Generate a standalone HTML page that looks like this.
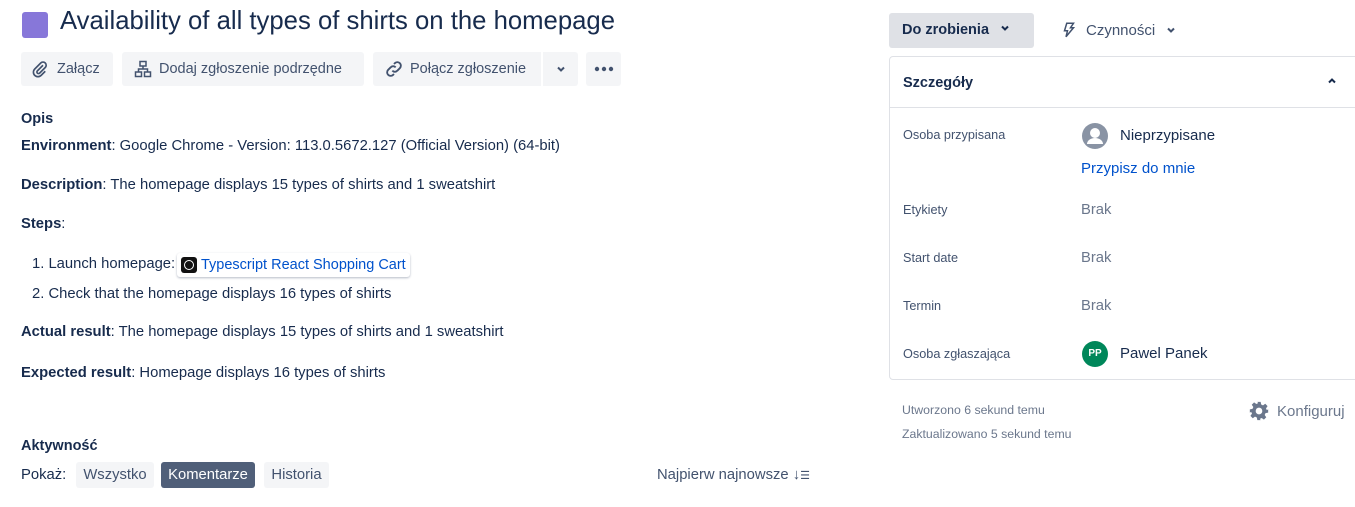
<!DOCTYPE html>
<html><head><meta charset="utf-8"><style>
*{box-sizing:border-box;margin:0;padding:0}
body{width:1355px;height:507px;background:#fff;font-family:"Liberation Sans",sans-serif;color:#172b4d;position:relative;overflow:hidden;font-size:14.8px}
.a{position:absolute;white-space:nowrap}
.btn{position:absolute;top:52px;height:34px;background:#f4f5f7;border-radius:3px;display:flex;align-items:center;font-size:14.5px;color:#42526e}
.lbl{font-size:12.7px;color:#42526e}
.gray{color:#6b778c}
b{font-weight:bold}
</style></head><body>
<div class="a" style="left:22px;top:12px;width:26px;height:26px;background:#8777d9;border-radius:3px"></div>
<div class="a" style="left:60px;top:7px;font-size:25.7px;color:#172b4d">Availability of all types of shirts on the homepage</div>

<div class="btn" style="left:21px;width:92px;padding-left:10px"><svg width="18" height="18" viewBox="0 0 24 24" fill="none" stroke="#42526e" stroke-width="2.2"><path d="M16 7l-7.5 7.5a2 2 0 0 0 3 3L19 10a4 4 0 0 0-6-6l-8 8a6 6 0 0 0 8.5 8.5L19 15"/></svg><span style="margin-left:8px">Załącz</span></div>
<div class="btn" style="left:122px;width:242px;padding-left:12px"><svg width="18" height="18" viewBox="0 0 24 24" fill="none" stroke="#42526e" stroke-width="2"><rect x="8" y="2" width="8" height="6"/><rect x="2" y="16" width="8" height="6"/><rect x="14" y="16" width="8" height="6"/><path d="M12 8v4M6 16v-4h12v4"/></svg><span style="margin-left:7px">Dodaj zgłoszenie podrzędne</span></div>
<div class="btn" style="left:373px;width:168px;padding-left:11px;border-radius:3px 0 0 3px"><svg width="20" height="20" viewBox="0 0 24 24" fill="none" stroke="#42526e" stroke-width="2.2"><path d="M10 14a4 4 0 0 0 6 0l3-3a4 4 0 0 0-6-6l-1 1M14 10a4 4 0 0 0-6 0l-3 3a4 4 0 0 0 6 6l1-1"/></svg><span style="margin-left:6px">Połącz zgłoszenie</span></div>
<div class="btn" style="left:543px;width:35px;justify-content:center;border-radius:0 3px 3px 0"><svg width="12" height="12" viewBox="0 0 12 12"><path d="M3 4.5l3 3 3-3" stroke="#42526e" stroke-width="2" fill="none"/></svg></div>
<div class="btn" style="left:586px;width:35px;justify-content:center"><svg width="20" height="6" viewBox="0 0 20 6"><circle cx="3" cy="3" r="2.2" fill="#42526e"/><circle cx="10" cy="3" r="2.2" fill="#42526e"/><circle cx="17" cy="3" r="2.2" fill="#42526e"/></svg></div>

<div class="a" style="left:21px;top:111px;font-size:14.5px;font-weight:bold">Opis</div>
<div class="a" style="left:21px;top:138px"><b>Environment</b>: Google Chrome - Version: 113.0.5672.127 (Official Version) (64-bit)</div>
<div class="a" style="left:21px;top:177px"><b>Description</b>: The homepage displays 15 types of shirts and 1 sweatshirt</div>
<div class="a" style="left:21px;top:216px"><b>Steps</b>:</div>
<div class="a" style="left:32px;top:256px">1. Launch homepage:</div>
<div class="a" style="left:177px;top:253px;height:24px;padding:0 4px;border-radius:3px;box-shadow:0 1px 2px rgba(9,30,66,.3);display:flex;align-items:center;color:#0052cc;font-size:14.5px"><span style="width:16px;height:16px;background:#111;border-radius:3px;display:inline-block;margin-right:4px;position:relative"><span style="position:absolute;left:3px;top:3px;width:10px;height:10px;border:1.3px solid #fff;border-radius:50%"></span></span>Typescript React Shopping Cart</div>
<div class="a" style="left:32px;top:286px">2. Check that the homepage displays 16 types of shirts</div>
<div class="a" style="left:21px;top:324px"><b>Actual result</b>: The homepage displays 15 types of shirts and 1 sweatshirt</div>
<div class="a" style="left:21px;top:365px"><b>Expected result</b>: Homepage displays 16 types of shirts</div>

<div class="a" style="left:21px;top:438px;font-weight:bold;font-size:14.5px">Aktywność</div>
<div class="a" style="left:21px;top:467px">Pokaż:</div>
<div class="a" style="left:76px;top:462px;height:26px;width:78px;background:#f4f5f7;border-radius:3px;text-align:center;line-height:26px;color:#42526e">Wszystko</div>
<div class="a" style="left:161px;top:462px;height:26px;width:94px;background:#505f79;border-radius:3px;text-align:center;line-height:26px;color:#fff">Komentarze</div>
<div class="a" style="left:264px;top:462px;height:26px;width:65px;background:#f4f5f7;border-radius:3px;text-align:center;line-height:26px;color:#42526e">Historia</div>
<div class="a" style="left:657px;top:467px;color:#42526e">Najpierw najnowsze ↓<span style="font-size:11px">☰</span></div>

<div class="a" style="left:889px;top:13px;width:145px;height:35px;background:#dfe1e6;border-radius:3px;font-weight:bold;font-size:14.5px;line-height:35px;padding-left:13px">Do zrobienia <svg width="12" height="12" viewBox="0 0 12 12" style="margin-left:6px"><path d="M3 4.5l3 3 3-3" stroke="#172b4d" stroke-width="2" fill="none"/></svg></div>
<div class="a" style="left:1060px;top:21px;color:#42526e;display:flex;align-items:center;font-size:15px"><svg width="18" height="18" viewBox="0 0 24 24" fill="none" stroke="#42526e" stroke-width="2"><path d="M9 3h9l-4 6h4L8 21l2-8H6z"/></svg><span style="margin-left:8px">Czynności</span><svg width="12" height="12" viewBox="0 0 12 12" style="margin-left:10px"><path d="M3 4.5l3 3 3-3" stroke="#42526e" stroke-width="2" fill="none"/></svg></div>

<div class="a" style="left:889px;top:56px;width:480px;height:324px;border:1px solid #dfe1e6;border-radius:4px"></div>
<div class="a" style="left:890px;top:107px;width:470px;height:1px;background:#dfe1e6"></div>
<div class="a" style="left:903px;top:75px;font-weight:bold;font-size:14.5px">Szczegóły</div>
<svg class="a" style="left:1326px;top:75px" width="12" height="12" viewBox="0 0 12 12"><path d="M3 7.5l3-3 3 3" stroke="#172b4d" stroke-width="2" fill="none"/></svg>

<div class="a lbl" style="left:903px;top:128px">Osoba przypisana</div>
<svg class="a" style="left:1082px;top:123px" width="26" height="26" viewBox="0 0 26 26"><circle cx="13" cy="13" r="13" fill="#8993a4"/><circle cx="13" cy="10" r="5" fill="#fff"/><path d="M5 21a8 6 0 0 1 16 0z" fill="#fff"/></svg>
<div class="a" style="left:1120px;top:127px;font-size:15px">Nieprzypisane</div>
<div class="a" style="left:1081px;top:160px;color:#0052cc;font-size:15px">Przypisz do mnie</div>
<div class="a lbl" style="left:903px;top:203px">Etykiety</div>
<div class="a gray" style="left:1081px;top:202px">Brak</div>
<div class="a lbl" style="left:903px;top:251px">Start date</div>
<div class="a gray" style="left:1081px;top:250px">Brak</div>
<div class="a lbl" style="left:903px;top:299px">Termin</div>
<div class="a gray" style="left:1081px;top:298px">Brak</div>
<div class="a lbl" style="left:903px;top:347px">Osoba zgłaszająca</div>
<div class="a" style="left:1082px;top:341px;width:26px;height:26px;border-radius:50%;background:#00875a;color:#fff;font-size:10px;font-weight:bold;text-align:center;line-height:26px">PP</div>
<div class="a" style="left:1120px;top:345px;font-size:15px">Pawel Panek</div>

<div class="a gray" style="left:902px;top:403px;font-size:12.3px">Utworzono 6 sekund temu</div>
<div class="a gray" style="left:902px;top:427px;font-size:12.3px">Zaktualizowano 5 sekund temu</div>
<div class="a gray" style="left:1249px;top:401px;display:flex;align-items:center;color:#6b778c"><svg width="20" height="20" viewBox="0 0 24 24"><path fill="#6b778c" d="M10 1h4l.6 3.2 2.2 1 2.7-1.9 2.8 2.8-1.9 2.7 1 2.2L23 10v4l-3.2.6-1 2.2 1.9 2.7-2.8 2.8-2.7-1.9-2.2 1L14 23h-4l-.6-3.2-2.2-1-2.7 1.9-2.8-2.8 1.9-2.7-1-2.2L1 14v-4l3.2-.6 1-2.2-1.9-2.7 2.8-2.8 2.7 1.9 2.2-1z"/><circle cx="12" cy="12" r="4" fill="#fff"/></svg><span style="margin-left:8px;font-size:15px">Konfiguruj</span></div>
</body></html>
